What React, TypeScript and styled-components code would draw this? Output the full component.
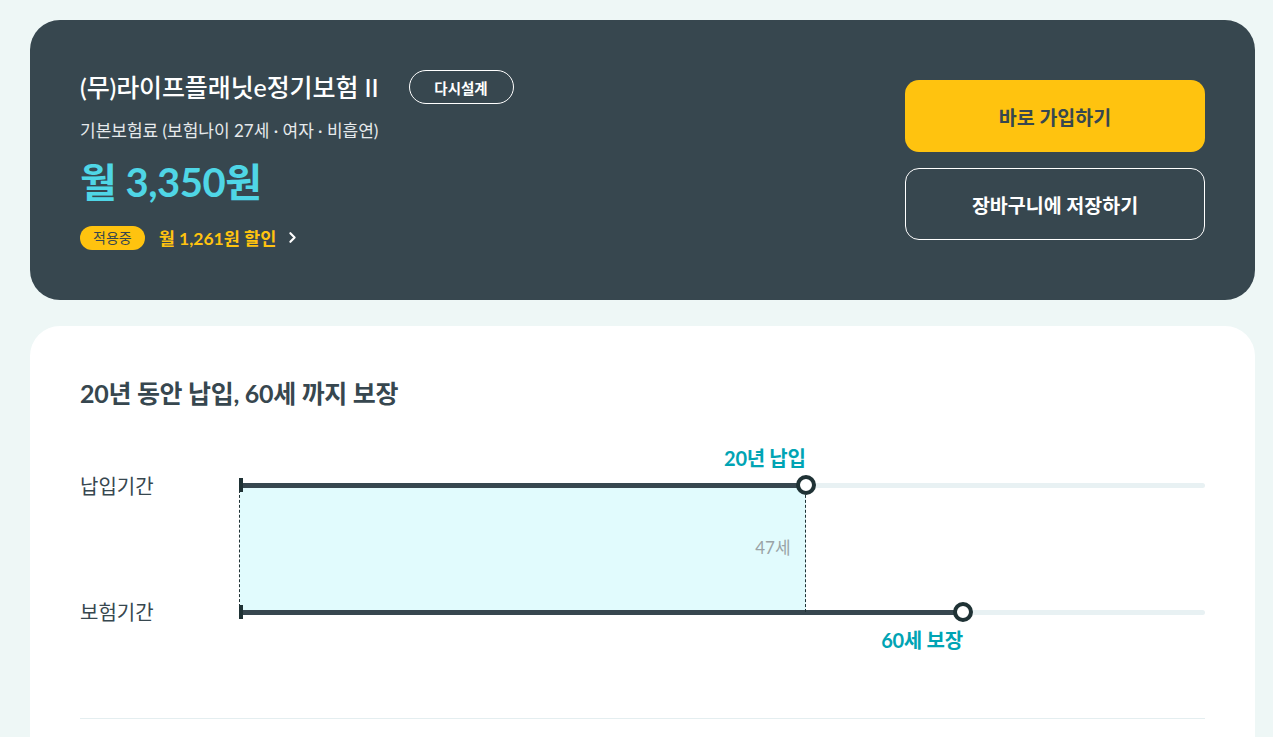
import React from "react";
import styled, { createGlobalStyle } from "styled-components";
import { ChevronRight } from "lucide-react";

const FONT = `"Lato", "Noto Sans CJK KR", "Noto Sans", sans-serif`;

const ColorPalette = {
  page: "#eef7f6",
  dark: "#37474f",
  darker: "#1f3235",
  yellow: "#ffc30f",
  cyan: "#4fd6e6",
  teal: "#00a4b4",
  track: "#e8f1f3",
  fill: "#e1fbfd",
  gray: "#9aa3a6",
};

const GlobalStyle = createGlobalStyle`
  body {
    margin: 0;
    background: ${ColorPalette.page};
    font-family: ${FONT};
  }
  * { box-sizing: border-box; }
`;

const Styles = {
  Page: styled.div`
    padding: 20px 18px 0 30px;
    display: flex;
    flex-direction: column;
    gap: 26px;
  `,

  SummaryCard: styled.section`
    background-color: ${ColorPalette.dark};
    border-radius: 30px;
    padding: 50px 50px 50px 50px;

    display: flex;
    justify-content: space-between;
    align-items: center;
  `,
  SummaryLeft: styled.div`
    display: flex;
    flex-direction: column;
  `,
  TitleRow: styled.div`
    display: flex;
    align-items: center;
    height: 34px;
  `,
  Title: styled.h1`
    margin: 0;
    font-size: 25px;
    line-height: 34px;
    font-weight: 500;
    color: #ffffff;
    letter-spacing: -0.1px;
  `,
  RedesignButton: styled.button`
    margin-left: 30px;
    width: 105px;
    height: 34px;
    border: 1.5px solid #ffffff;
    border-radius: 17px;
    background: transparent;
    color: #ffffff;
    font-family: ${FONT};
    font-size: 14.5px;
    font-weight: 700;
    cursor: pointer;
  `,
  BaseInfo: styled.div`
    margin-top: 15px;
    font-size: 17px;
    line-height: 24px;
    color: #e6eaec;
  `,
  Price: styled.div`
    margin-top: 16px;
    font-size: 40px;
    line-height: 46px;
    font-weight: 700;
    color: ${ColorPalette.cyan};
    letter-spacing: -0.5px;
  `,
  DiscountRow: styled.div`
    margin-top: 20px;
    display: flex;
    align-items: center;
  `,
  Badge: styled.span`
    height: 24px;
    padding: 0 13px;
    border-radius: 12px;
    background: ${ColorPalette.yellow};
    color: ${ColorPalette.dark};
    font-size: 14px;
    line-height: 24px;
  `,
  Discount: styled.span`
    margin-left: 14px;
    font-size: 17.5px;
    font-weight: 700;
    color: ${ColorPalette.yellow};
  `,
  Chevron: styled.span`
    margin-left: 8px;
    display: flex;
    color: #ffffff;
  `,
  ActionColumn: styled.div`
    width: 300px;
    display: flex;
    flex-direction: column;
    gap: 16px;
  `,
  ActionButton: styled.button<{ primary?: boolean }>`
    height: 72px;
    border-radius: 14px;
    border: ${({ primary }) => (primary ? "none" : "1px solid #ffffff")};
    background: ${({ primary }) => (primary ? ColorPalette.yellow : "transparent")};
    color: ${({ primary }) => (primary ? ColorPalette.dark : "#ffffff")};
    font-family: ${FONT};
    font-size: 19.5px;
    font-weight: 700;
    cursor: pointer;
  `,

  DetailCard: styled.section`
    background-color: #ffffff;
    border-radius: 30px 30px 0 0;
    padding: 54px 50px 18px 50px;
  `,
  DetailTitle: styled.h2`
    margin: 0;
    font-size: 25px;
    line-height: 26px;
    font-weight: 700;
    color: ${ColorPalette.dark};
    letter-spacing: -0.3px;
  `,
  Chart: styled.div`
    margin-top: 34px;
    display: grid;
    grid-template-columns: 160px 1fr;
  `,
  LabelColumn: styled.div`
    display: flex;
    flex-direction: column;
    padding-top: 34px;
    gap: 102px;
  `,
  RowLabel: styled.div`
    font-size: 20px;
    line-height: 24px;
    color: ${ColorPalette.dark};
  `,
  Canvas: styled.div`
    position: relative;
    height: 215px;
  `,
  Track: styled.div<{ top: number }>`
    position: absolute;
    left: 0;
    right: 0;
    top: ${({ top }) => top - 2.5}px;
    height: 5px;
    border-radius: 3px;
    background: ${ColorPalette.track};
  `,
  Bar: styled.div`
    position: absolute;
    left: 0;
    top: 0;
    bottom: 0;
    background: ${ColorPalette.dark};
  `,
  Tick: styled.div<{ top: number }>`
    position: absolute;
    left: -1px;
    top: ${({ top }) => top - 7}px;
    width: 4px;
    height: 14px;
    background: ${ColorPalette.darker};
    z-index: 2;
  `,
  Knob: styled.div<{ top: number }>`
    position: absolute;
    top: ${({ top }) => top - 10}px;
    width: 20px;
    height: 20px;
    margin-left: -10px;
    border-radius: 50%;
    border: 4px solid ${ColorPalette.darker};
    background: #ffffff;
    z-index: 3;
  `,
  Fill: styled.div<{ top: number; bottom: number }>`
    position: absolute;
    left: 0;
    top: ${({ top }) => top}px;
    height: ${({ top, bottom }) => bottom - top}px;
    background: ${ColorPalette.fill};
  `,
  Guide: styled.div<{ top: number; bottom: number }>`
    position: absolute;
    top: ${({ top }) => top}px;
    height: ${({ top, bottom }) => bottom - top}px;
    margin-left: -1px;
    border-left: 1px dashed ${ColorPalette.darker};
    z-index: 1;
  `,
  Marker: styled.div<{ top: number }>`
    position: absolute;
    top: ${({ top }) => top}px;
    transform: translateX(-100%);
    font-size: 20px;
    line-height: 24px;
    font-weight: 700;
    color: ${ColorPalette.teal};
    white-space: nowrap;
    letter-spacing: -0.3px;
  `,
  AgeNote: styled.div<{ top: number }>`
    position: absolute;
    top: ${({ top }) => top}px;
    transform: translateX(calc(-100% - 15px));
    font-size: 17px;
    line-height: 22px;
    color: ${ColorPalette.gray};
    white-space: nowrap;
  `,
  Divider: styled.hr`
    margin: 63px 0 0 0;
    border: none;
    border-top: 1px solid #e4eef0;
  `,
};

const TRACK_WIDTH = 964;
const plan = {
  payEnd: 565,
  coverEnd: 722,
};

const PAY_Y = 45;
const COVER_Y = 172;

export default function App() {
  const payPct = `${(plan.payEnd / TRACK_WIDTH) * 100}%`;
  const coverPct = `${(plan.coverEnd / TRACK_WIDTH) * 100}%`;

  return (
    <>
      <GlobalStyle />
      <Styles.Page>
        <Styles.SummaryCard>
          <Styles.SummaryLeft>
            <Styles.TitleRow>
              <Styles.Title>(무)라이프플래닛e정기보험 II</Styles.Title>
              <Styles.RedesignButton>다시설계</Styles.RedesignButton>
            </Styles.TitleRow>
            <Styles.BaseInfo>
              기본보험료 (보험나이 27세 · 여자 · 비흡연)
            </Styles.BaseInfo>
            <Styles.Price>월 3,350원</Styles.Price>
            <Styles.DiscountRow>
              <Styles.Badge>적용중</Styles.Badge>
              <Styles.Discount>월 1,261원 할인</Styles.Discount>
              <Styles.Chevron>
                <ChevronRight size={17} strokeWidth={3} />
              </Styles.Chevron>
            </Styles.DiscountRow>
          </Styles.SummaryLeft>

          <Styles.ActionColumn>
            <Styles.ActionButton primary>바로 가입하기</Styles.ActionButton>
            <Styles.ActionButton>장바구니에 저장하기</Styles.ActionButton>
          </Styles.ActionColumn>
        </Styles.SummaryCard>

        <Styles.DetailCard>
          <Styles.DetailTitle>20년 동안 납입, 60세 까지 보장</Styles.DetailTitle>

          <Styles.Chart>
            <Styles.LabelColumn>
              <Styles.RowLabel>납입기간</Styles.RowLabel>
              <Styles.RowLabel>보험기간</Styles.RowLabel>
            </Styles.LabelColumn>

            <Styles.Canvas>
              <Styles.Fill top={PAY_Y} bottom={COVER_Y} style={{ width: payPct }} />
              <Styles.Guide top={PAY_Y} bottom={COVER_Y} style={{ left: 0 }} />
              <Styles.Guide top={PAY_Y} bottom={COVER_Y} style={{ left: payPct }} />

              <Styles.Track top={PAY_Y}>
                <Styles.Bar style={{ width: payPct }} />
              </Styles.Track>
              <Styles.Tick top={PAY_Y} />
              <Styles.Knob top={PAY_Y} style={{ left: payPct }} />
              <Styles.Marker top={PAY_Y - 39} style={{ left: payPct }}>
                20년 납입
              </Styles.Marker>

              <Styles.AgeNote top={97} style={{ left: payPct }}>
                47세
              </Styles.AgeNote>

              <Styles.Track top={COVER_Y}>
                <Styles.Bar style={{ width: coverPct }} />
              </Styles.Track>
              <Styles.Tick top={COVER_Y} />
              <Styles.Knob top={COVER_Y} style={{ left: coverPct }} />
              <Styles.Marker top={COVER_Y + 16} style={{ left: coverPct }}>
                60세 보장
              </Styles.Marker>
            </Styles.Canvas>
          </Styles.Chart>

          <Styles.Divider />
        </Styles.DetailCard>
      </Styles.Page>
    </>
  );
}
